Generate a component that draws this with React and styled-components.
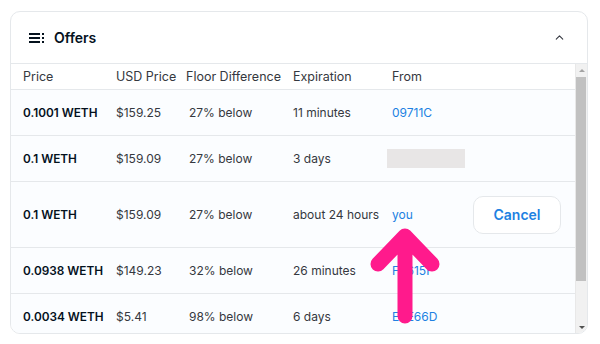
import styled, { createGlobalStyle } from "styled-components";
import { ChevronUp } from "lucide-react";

const GlobalStyle = createGlobalStyle`
  body {
    margin: 0;
    background: #ffffff;
    font-family: "Inter", "Open Sans", sans-serif;
  }
`;

const offers = [
  { price: "0.1001 WETH", usd: "$159.25", floor: "27% below", exp: "11 minutes", from: "09711C" },
  { price: "0.1 WETH", usd: "$159.09", floor: "27% below", exp: "3 days", placeholder: true },
  { price: "0.1 WETH", usd: "$159.09", floor: "27% below", exp: "about 24 hours", from: "you", mine: true },
  { price: "0.0938 WETH", usd: "$149.23", floor: "32% below", exp: "26 minutes", from: "F8615F" },
  { price: "0.0034 WETH", usd: "$5.41", floor: "98% below", exp: "6 days", from: "E8E66D" },
];

function ListIcon() {
  return (
    <svg width="16" height="12" viewBox="0 0 16 12">
      <rect x="0" y="1" width="11" height="2" fill="#04111d" />
      <rect x="0" y="5" width="11" height="2" fill="#04111d" />
      <rect x="0" y="9" width="11" height="2" fill="#04111d" />
      <rect x="13" y="1" width="2" height="2" fill="#04111d" />
      <rect x="13" y="5" width="2" height="2" fill="#04111d" />
      <rect x="13" y="9" width="2" height="2" fill="#04111d" />
    </svg>
  );
}

export default function App() {
  return (
    <>
      <GlobalStyle />
      <Page>
        <Card>
          <Header>
            <ListIcon />
            <span className="title">Offers</span>
            <ChevronUp size={13} strokeWidth={2} color="#353840" className="chevron" />
          </Header>
          <Body>
            <Table>
              <HeadRow>
                <span>Price</span>
                <span>USD Price</span>
                <span>Floor Difference</span>
                <span>Expiration</span>
                <span>From</span>
              </HeadRow>
              {offers.map((o, i) => (
                <Row key={i} $tall={o.mine}>
                  <span className="price">{o.price}</span>
                  <span className="usd">{o.usd}</span>
                  <span className="floor">{o.floor}</span>
                  <span className="exp">{o.exp}</span>
                  {o.placeholder ? <Placeholder /> : <span className="from">{o.from}</span>}
                  {o.mine && <CancelButton>Cancel</CancelButton>}
                </Row>
              ))}
            </Table>
            <ScrollBar>
              <ScrollButton $dir="up" />
              <Thumb />
              <ScrollButton $dir="down" />
            </ScrollBar>
          </Body>
          <Arrow width="70" height="100" viewBox="0 0 70 100">
            <path d="M35 10 L35 90 M8 38 L35 10 L62 38" fill="none" stroke="#ff1a8c" strokeWidth="15" strokeLinecap="round" strokeLinejoin="round" />
          </Arrow>
        </Card>
      </Page>
    </>
  );
}

const Page = styled.div`
  padding: 11px 12px 10px 10px;
`;

const Card = styled.div`
  position: relative;
  width: 578px;
  height: 323px;
  box-sizing: border-box;
  border: 1px solid #e5e8eb;
  border-radius: 10px;
  overflow: hidden;
  display: flex;
  flex-direction: column;
  background: #ffffff;
`;

const Header = styled.div`
  height: 52px;
  flex-shrink: 0;
  display: flex;
  align-items: center;
  padding: 0 21px 0 18px;
  border-bottom: 1px solid #e5e8eb;
  box-sizing: border-box;

  .title {
    margin-left: 9px;
    font-size: 14px;
    font-weight: 600;
    color: #04111d;
  }

  .chevron {
    margin-left: auto;
  }
`;

const Body = styled.div`
  flex: 1;
  min-height: 0;
  display: flex;
`;

const Table = styled.div`
  flex: 1;
  overflow: hidden;
  background: #fbfdff;
`;

const ScrollBar = styled.div`
  width: 11px;
  flex-shrink: 0;
  display: flex;
  flex-direction: column;
  background: #f1f1f1;
  border-left: 1px solid #e8e8e8;
`;

const ScrollButton = styled.div`
  height: 12px;
  flex-shrink: 0;
  margin-top: ${(p) => (p.$dir === "down" ? "auto" : "0")};
  display: flex;
  align-items: center;
  justify-content: center;

  &::before {
    content: "";
    width: 0;
    height: 0;
    border-left: 3px solid transparent;
    border-right: 3px solid transparent;
    ${(p) =>
      p.$dir === "up"
        ? "border-bottom: 3px solid #a3a3a3;"
        : "border-top: 3px solid #505050;"}
  }
`;

const Thumb = styled.div`
  height: 204px;
  margin: 1px 1px 0 0;
  background: #c1c1c1;
`;

const columns = "93px 70px 107px 99px 81px 1fr";

const HeadRow = styled.div`
  display: grid;
  grid-template-columns: ${columns};
  align-items: center;
  height: 25px;
  padding-left: 12px;
  background: #ffffff;
  border-bottom: 1px solid #e5e8eb;
  font-size: 12.5px;
  color: #353840;
`;

const Row = styled.div`
  display: grid;
  grid-template-columns: ${columns};
  align-items: center;
  height: ${(p) => (p.$tall ? "66px" : "46px")};
  padding-left: 12px;
  border-bottom: 1px solid #e5e8eb;
  box-sizing: border-box;
  font-size: 12px;
  color: #353840;

  .price {
    font-size: 11.8px;
    font-weight: 600;
    color: #04111d;
  }

  .floor {
    padding-left: 3px;
  }

  .from {
    color: #2081e2;
  }
`;

const Placeholder = styled.div`
  width: 78px;
  height: 19px;
  margin-left: -5px;
  background: #e8e6e6;
`;

const CancelButton = styled.button`
  justify-self: start;
  width: 88px;
  height: 38px;
  background: #ffffff;
  border: 1px solid #e5e8eb;
  border-radius: 10px;
  font-family: inherit;
  font-size: 14px;
  font-weight: 600;
  color: #2081e2;
`;

const Arrow = styled.svg`
  position: absolute;
  left: 359px;
  top: 214px;
`;
